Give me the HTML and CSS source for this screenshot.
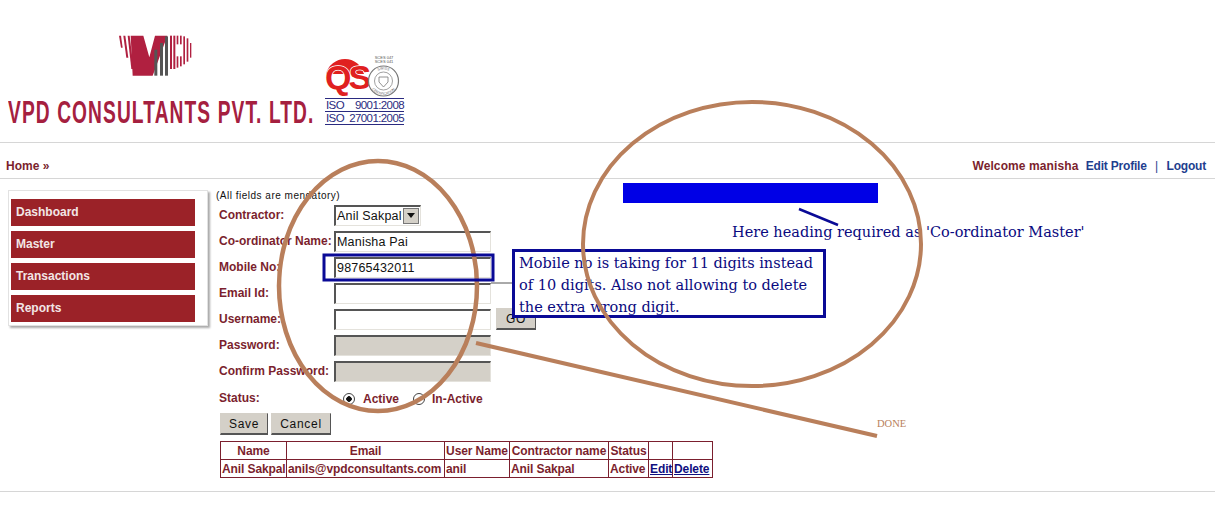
FILE: index.html
```html
<!DOCTYPE html>
<html lang="en">
<head>
  <meta charset="UTF-8" />
  <title>VPD Consultants - Co-ordinator Master</title>
  <link rel="stylesheet" href="styles.css">
</head>
<body>
  <div class="page">
    <div class="header">
      <div class="logo">
        <svg class="logo-mark" width="90" height="55" viewBox="0 0 270 165">
          <g fill="#b02040">
            <path d="M27 20h6l5 36h-5z"/>
            <path d="M40 20h6l9 66h-6z"/>
            <path d="M53 20h6l12 100h-7z"/>
            <path d="M62 20h38l18 65 17-65h37l-44 120H68z"/>
            <rect x="180" y="20" width="6" height="100"/>
            <rect x="190" y="20" width="6" height="100"/>
            <rect x="200" y="20" width="5" height="26"/>
            <rect x="200" y="82" width="5" height="34"/>
            <rect x="210" y="20" width="5" height="26"/>
            <rect x="210" y="82" width="5" height="30"/>
            <rect x="220" y="22" width="5" height="84"/>
            <rect x="230" y="28" width="5" height="70"/>
            <rect x="240" y="42" width="4" height="44"/>
          </g>
          <g fill="#555">
            <rect x="133" y="62" width="9" height="78"/>
            <rect x="150" y="42" width="9" height="98"/>
            <rect x="165" y="22" width="9" height="118"/>
          </g>
        </svg>
        <div class="logo-name">VPD CONSULTANTS PVT. LTD.</div>
      </div>
      <div class="iso">
        <svg width="80" height="44" viewBox="0 0 80 44">
          <defs>
            <path id="sealTop" d="M47 27a11.5 11.5 0 0 1 23 0"/>
            <path id="sealBottom" d="M44.5 27a14 14 0 0 0 28 0"/>
          </defs>
          <path d="M1 20a19.500 19.500 0 0 1 38 0z" fill="#e02020"/>
          <text x="0" y="35" class="qs-text">QS</text>
          <circle cx="58.5" cy="27" r="15" fill="#fff" stroke="#777" stroke-width="1.2"/>
          <circle cx="58.5" cy="27" r="9" fill="#fff" stroke="#888" stroke-width="0.8"/>
          <path d="M54 23h9v5l-4.500 5-4.500-5z" fill="none" stroke="#777" stroke-width="0.8"/>
          <text class="seal-text"><textPath href="#sealTop" startOffset="50%">SWISS</textPath></text>
          <text class="seal-text"><textPath href="#sealBottom" startOffset="50%">CERTIFICATION</textPath></text>
          <text x="59" y="5" class="iso-small">SCES 047</text>
          <text x="59" y="9" class="iso-small">SCES 041</text>
        </svg>
        <div class="iso-line"><span>ISO</span><span>9001:2008</span></div>
        <div class="iso-line"><span>ISO</span><span>27001:2005</span></div>
      </div>
    </div>

    <div class="topbar">
      <div class="crumb">Home »</div>
      <div class="user-links">
        <span class="welcome">Welcome manisha</span>
        <a href="#">Edit Profile</a>
        <span class="sep">|</span>
        <a href="#">Logout</a>
      </div>
    </div>

    <div class="main">
      <div class="sidebar">
        <div class="menu-item">Dashboard</div>
        <div class="menu-item">Master</div>
        <div class="menu-item">Transactions</div>
        <div class="menu-item">Reports</div>
      </div>

      <div class="content">
        <div class="note">(All fields are mendatory)</div>
        <div class="form-row">
          <label>Contractor:</label>
          <div class="fake-select"><span>Anil Sakpal</span><i class="arrow"></i></div>
        </div>
        <div class="form-row">
          <label>Co-ordinator Name:</label>
          <input class="field" type="text" value="Manisha Pai" />
        </div>
        <div class="form-row">
          <label>Mobile No:</label>
          <input class="field" type="text" value="98765432011" />
        </div>
        <div class="form-row">
          <label>Email Id:</label>
          <input class="field" type="text" />
        </div>
        <div class="form-row">
          <label>Username:</label>
          <input class="field" type="text" />
          <button class="btn btn-go">GO</button>
        </div>
        <div class="form-row">
          <label>Password:</label>
          <input class="field field-off" type="text" disabled />
        </div>
        <div class="form-row">
          <label>Confirm Password:</label>
          <input class="field field-off" type="text" disabled />
        </div>
        <div class="form-row status-row">
          <label>Status:</label>
          <div class="radios">
            <span class="radio radio-on"></span><span>Active</span>
            <span class="radio"></span><span>In-Active</span>
          </div>
        </div>
        <div class="buttons">
          <button class="btn btn-save">Save</button>
          <button class="btn btn-cancel">Cancel</button>
        </div>
        <table class="grid">
          <tr>
            <th>Name</th><th>Email</th><th>User Name</th><th>Contractor name</th><th>Status</th><th></th><th></th>
          </tr>
          <tr>
            <td>Anil Sakpal</td><td>anils@vpdconsultants.com</td><td>anil</td><td>Anil Sakpal</td><td>Active</td>
            <td><a href="#">Edit</a></td><td><a href="#">Delete</a></td>
          </tr>
        </table>
      </div>
    </div>

    <div class="footer"></div>

    <!-- review markup drawn over the screenshot -->
    <div class="blue-bar"></div>
    <div class="heading-note">Here heading required as 'Co-ordinator Master'</div>
    <div class="mobile-note">Mobile no is taking for 11 digits instead<br>of 10 digits. Also not allowing to delete<br>the extra wrong digit.</div>
    <div class="done">DONE</div>
    <svg class="markup" width="1215" height="520" viewBox="0 0 1215 520">
      <line x1="491" y1="283" x2="512" y2="283" stroke="#555" stroke-width="1"/>
      <ellipse cx="378" cy="286" rx="99" ry="125" fill="none" stroke="#b97f5b" stroke-width="4.500"/>
      <ellipse cx="752" cy="244" rx="169" ry="142" fill="none" stroke="#b97f5b" stroke-width="4"/>
      <line x1="476" y1="343" x2="877" y2="436" stroke="#b97f5b" stroke-width="4"/>
      <rect x="324" y="255" width="169" height="25" fill="none" stroke="#0a0a96" stroke-width="3"/>
      <line x1="799" y1="209" x2="838" y2="225" stroke="#0a0a96" stroke-width="2.500"/>
    </svg>
  </div>
</body>
</html>
```
FILE: styles.css
```css
* {
  box-sizing: border-box;
}

body {
  margin: 0;
  background: #fff;
  font-family: 'Liberation Sans', Arial, sans-serif;
  font-size: 12px;
  color: #7b1f2e;
}

.page {
  position: relative;
  width: 1215px;
  height: 520px;
  overflow: hidden;
}

/* header */
.header {
  display: flex;
  align-items: flex-end;
  height: 143px;
  padding: 0 0 17px 8px;
  border-bottom: 1px solid #d6d6d6;
}

.logo {
  display: flex;
  flex-direction: column;
  width: 317px;
  margin-bottom: -3px;
}

.logo-mark {
  margin: 0 0 12px 102px;
}

.logo-name {
  font-weight: bold;
  font-size: 32px;
  line-height: 32px;
  letter-spacing: 1.8px;
  color: #a5203f;
  white-space: nowrap;
  transform: scaleX(0.6);
  transform-origin: left center;
}

.iso {
  width: 79px;
}

.iso svg {
  display: block;
}

.qs-text {
  font-family: 'Liberation Sans', sans-serif;
  font-weight: bold;
  font-size: 34px;
  letter-spacing: -3px;
  fill: #e02020;
  stroke: #fff;
  stroke-width: 1.500px;
  paint-order: stroke;
}

.seal-text {
  font-family: 'Liberation Sans', sans-serif;
  font-size: 3.500px;
  fill: #666;
  text-anchor: middle;
}

.iso-small {
  font-family: 'Liberation Sans', sans-serif;
  font-size: 4px;
  fill: #555;
  text-anchor: middle;
}

.iso-line {
  display: flex;
  justify-content: space-between;
  height: 13px;
  line-height: 12px;
  font-size: 11.500px;
  letter-spacing: -0.6px;
  padding-left: 1px;
  color: #2a2a80;
  border-top: 1px solid #2a2a80;
}

.iso-line:last-child {
  height: 14px;
  border-bottom: 1px solid #2a2a80;
}

/* home / welcome bar */
.topbar {
  display: flex;
  justify-content: space-between;
  align-items: flex-end;
  height: 36px;
  padding: 0 9px 5px 6px;
  border-bottom: 1px solid #d6d6d6;
  font-weight: bold;
}

.crumb {
  color: #7b1f2e;
}

.user-links a {
  color: #1f3f8f;
  text-decoration: none;
  margin-left: 2px;
  letter-spacing: -0.2px;
}

.user-links .sep {
  color: #1f3f8f;
  font-weight: normal;
  margin: 0 3px 0 5px;
}

.welcome {
  color: #7b1f2e;
  margin-right: 2px;
  letter-spacing: 0.1px;
}

/* body */
.main {
  display: flex;
  align-items: flex-start;
}

.sidebar {
  width: 200px;
  height: 136px;
  margin: 11px 0 0 8px;
  padding: 8px 12px 0 2px;
  background: #fff;
  border: 1px solid #e2e2e2;
  box-shadow: 2px 2px 2px #aaa;
}

.menu-item {
  height: 27px;
  margin-bottom: 5px;
  padding-left: 5px;
  line-height: 27px;
  background: #9b2228;
  color: #f2e6e6;
  font-weight: bold;
}

.content {
  margin-left: 8px;
  padding-top: 11px;
}

.note {
  height: 12px;
  font-size: 10px;
  line-height: 12px;
  letter-spacing: 0.5px;
  color: #111;
}

.form-row {
  display: flex;
  align-items: center;
  height: 26px;
  padding-left: 3px;
}

.form-row label {
  width: 115px;
  font-weight: bold;
  white-space: nowrap;
}

.field {
  width: 157px;
  height: 21px;
  padding: 1px 1px;
  font-family: 'Liberation Sans', sans-serif;
  font-size: 12.500px;
  letter-spacing: 0.2px;
  color: #111;
  background: #fff;
  border: 1px solid #e4e2dc;
  border-top: 2px solid #555;
  border-left: 2px solid #555;
  border-radius: 0;
}

.field-off {
  background: #d4d0c8;
}

.fake-select {
  display: flex;
  align-items: center;
  justify-content: space-between;
  width: 87px;
  height: 21px;
  padding: 0 1px 0 1px;
  font-size: 12.500px;
  letter-spacing: 0.2px;
  color: #111;
  border: 1px solid #e4e2dc;
  border-top: 2px solid #555;
  border-left: 2px solid #555;
}

.arrow {
  display: flex;
  align-items: center;
  justify-content: center;
  width: 16px;
  height: 16px;
  background: #d4d0c8;
  border: 1px solid #777;
}

.arrow::before {
  content: "";
  border: 4px solid transparent;
  border-top: 5px solid #111;
  border-bottom: 0;
}

.btn {
  height: 22px;
  padding: 0;
  font-family: 'Liberation Sans', sans-serif;
  font-size: 12px;
  letter-spacing: 0.7px;
  color: #111;
  background: #d4d0c8;
  border: 1px solid #d4d0c8;
  border-right-color: #555;
  border-bottom: 2px solid #555;
}

.btn-go {
  width: 40px;
  margin-left: 5px;
}

.btn-save {
  width: 48px;
}

.btn-cancel {
  width: 60px;
}

.status-row {
  height: 27px;
}

.radios {
  display: flex;
  align-items: center;
  margin-left: 9px;
  padding-top: 2px;
  font-weight: bold;
}

.radio {
  width: 12px;
  height: 12px;
  margin: 0 8px 0 0;
  background: #fff;
  border: 1px solid #444;
  border-radius: 50%;
}

.radio-on {
  background: radial-gradient(circle, #111 0 2.5px, #fff 3px);
}

.radios .radio:nth-child(3) {
  margin-left: 14px;
  margin-right: 7px;
}

.buttons {
  display: flex;
  gap: 3px;
  margin: 2px 0 6px 4px;
}

.grid {
  width: 492px;
  margin-left: 4px;
  table-layout: fixed;
  border-collapse: collapse;
  font-weight: bold;
}

.grid th:nth-child(1) { width: 66px; }
.grid th:nth-child(2) { width: 158px; }
.grid th:nth-child(3) { width: 65px; }
.grid th:nth-child(4) { width: 99px; }
.grid th:nth-child(5) { width: 40px; }
.grid th:nth-child(6) { width: 24px; }
.grid th:nth-child(7) { width: 40px; }

.grid th,
.grid td {
  height: 18px;
  padding: 0 1px;
  border: 1px solid #7b1f2e;
  white-space: nowrap;
  line-height: 14px;
  letter-spacing: -0.1px;
}

.grid td {
  text-align: left;
}

.grid a {
  color: #10107f;
}

.footer {
  position: absolute;
  top: 491px;
  left: 0;
  right: 0;
  border-top: 1px solid #d6d6d6;
}

/* review markup */
.markup {
  position: absolute;
  top: 0;
  left: 0;
  pointer-events: none;
}

.blue-bar {
  position: absolute;
  left: 623px;
  top: 183px;
  width: 255px;
  height: 20px;
  background: #0000e6;
}

.heading-note,
.mobile-note {
  position: absolute;
  font-family: 'DejaVu Serif', serif;
  color: #0a0a80;
  white-space: nowrap;
}

.heading-note {
  left: 732px;
  top: 222px;
  font-size: 14.500px;
  line-height: 20px;
}

.mobile-note {
  left: 512px;
  top: 249px;
  width: 314px;
  height: 69px;
  padding: 0 4px;
  font-size: 14.500px;
  line-height: 22px;
  background: #fff;
  border: 3px solid #0a0a96;
}

.done {
  position: absolute;
  left: 877px;
  top: 418px;
  font-family: 'Liberation Serif', serif;
  font-size: 10.500px;
  color: #b97f5b;
}
```
